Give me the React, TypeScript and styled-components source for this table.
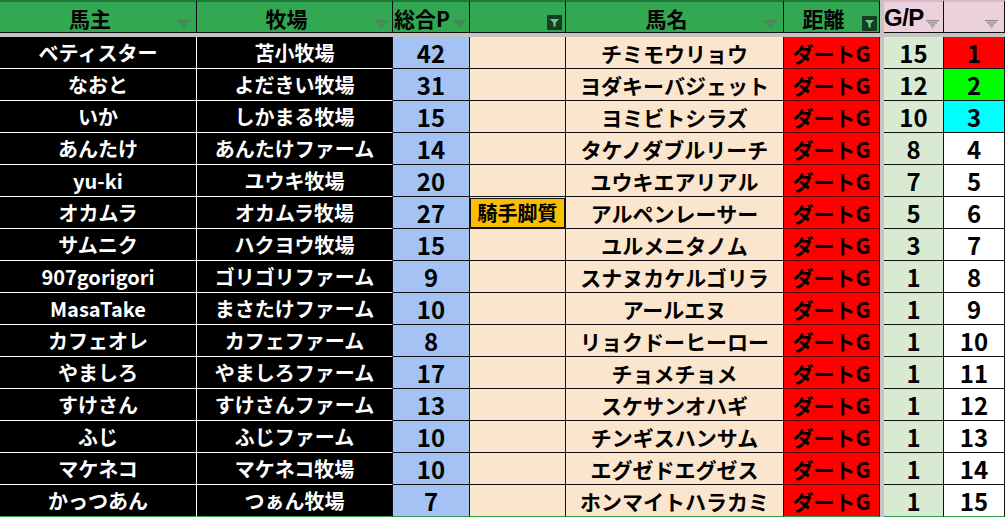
import React from "react";
import styled, { createGlobalStyle } from "styled-components";

const GlobalStyle = createGlobalStyle`
  html, body { margin: 0; padding: 0; background: #ffffff; }
  body { font-family: "Noto Sans CJK JP", "Noto Sans", sans-serif; }
`;

const COLS = "197px 196px 77px 96px 218px 96px 4px 60px 61px";

const Sheet = styled.div`
  width: 1005px;
  height: 517px;
  overflow: hidden;
  display: flex;
  flex-direction: column;
  background: #ffffff;
`;

const HeaderRow = styled.div`
  display: grid;
  grid-template-columns: ${COLS};
  height: 33px;
  box-sizing: border-box;
`;

const HeaderCell = styled.div<{ $bg: string; $align?: "center" | "left" }>`
  position: relative;
  display: flex;
  align-items: center;
  justify-content: ${(p) => (p.$align === "left" ? "flex-start" : "center")};
  box-sizing: border-box;
  background: ${(p) => p.$bg};
  border-top: 2px solid ${(p) => (p.$bg === "#33a852" ? "#1f7a3a" : "#d9b8c8")};
  border-right: 1px solid #101010;
  border-bottom: 1px solid #101010;
  font-size: 21px;
  font-weight: 700;
  line-height: 1;
  color: #000;
  padding-top: 2px;
  padding-right: ${(p) => (p.$align === "left" ? 0 : 16)}px;
  white-space: nowrap;
`;

const HeaderText = styled.span<{ $shift?: number }>`
  margin-left: ${(p) => p.$shift ?? 0}px;
`;

const LatinHeader = styled.span`
  font-family: "Liberation Sans", "Noto Sans", sans-serif;
  font-size: 24px;
  letter-spacing: -0.5px;
`;

const Gap = styled.div`
  background: #c4c4c4;
`;

const Band = styled.div`
  height: 4px;
  background: #c4c4c4;
`;

const BodyRow = styled.div`
  display: grid;
  grid-template-columns: ${COLS};
  height: 32px;
`;

const Cell = styled.div<{ $bg: string; $fg?: string; $line?: string; $under?: string; $last?: boolean; $size?: number }>`
  display: flex;
  align-items: center;
  justify-content: center;
  box-sizing: border-box;
  background: ${(p) => p.$bg};
  color: ${(p) => p.$fg ?? "#000"};
  border-right: 1px solid ${(p) => p.$line ?? "#111"};
  border-bottom: 1px solid ${(p) => (p.$last ? "#2f9e4b" : p.$under ?? p.$line ?? "#111")};
  font-size: ${(p) => p.$size ?? 21}px;
  font-weight: 700;
  line-height: 1;
  white-space: nowrap;
  padding-top: 1px;
  min-width: 0;
`;

const Num = styled.span`
  font-size: 24px;
  line-height: 1;
`;

const Badge = styled.div`
  width: 100%;
  height: 100%;
  box-sizing: border-box;
  display: flex;
  align-items: center;
  justify-content: center;
  background: #fbbc04;
  border: 1px solid #111;
  font-size: 20px;
`;

const FilterSlot = styled.span<{ $right: number; $bottom?: number }>`
  position: absolute;
  right: ${(p) => p.$right}px;
  bottom: ${(p) => p.$bottom ?? 4}px;
  display: flex;
`;

const FilterIcon = ({ color }: { color: string }) => (
  <svg width="13" height="8" viewBox="0 0 13 8">
    <rect x="0" y="0" width="13" height="1.3" fill={color} />
    <rect x="2" y="2.2" width="9" height="1.3" fill={color} />
    <rect x="4" y="4.4" width="5" height="1.3" fill={color} />
    <rect x="5.5" y="6.6" width="2" height="1.3" fill={color} />
  </svg>
);

const ActiveFilter = () => (
  <svg width="15" height="15" viewBox="0 0 15 15">
    <rect x="0" y="0" width="15" height="15" rx="1" fill="#173d22" />
    <path d="M3 4 H12 L8.6 7.8 V11.5 H6.4 V7.8 Z" fill="#63d383" />
  </svg>
);

type Row = {
  owner: string;
  farm: string;
  total: number;
  note?: string;
  horse: string;
  gp: number;
  rank: number;
};

const rows: Row[] = [
  { owner: "ベティスター", farm: "苫小牧場", total: 42, horse: "チミモウリョウ", gp: 15, rank: 1 },
  { owner: "なおと", farm: "よだきい牧場", total: 31, horse: "ヨダキーバジェット", gp: 12, rank: 2 },
  { owner: "いか", farm: "しかまる牧場", total: 15, horse: "ヨミビトシラズ", gp: 10, rank: 3 },
  { owner: "あんたけ", farm: "あんたけファーム", total: 14, horse: "タケノダブルリーチ", gp: 8, rank: 4 },
  { owner: "yu-ki", farm: "ユウキ牧場", total: 20, horse: "ユウキエアリアル", gp: 7, rank: 5 },
  { owner: "オカムラ", farm: "オカムラ牧場", total: 27, note: "騎手脚質", horse: "アルペンレーサー", gp: 5, rank: 6 },
  { owner: "サムニク", farm: "ハクヨウ牧場", total: 15, horse: "ユルメニタノム", gp: 3, rank: 7 },
  { owner: "907gorigori", farm: "ゴリゴリファーム", total: 9, horse: "スナヌカケルゴリラ", gp: 1, rank: 8 },
  { owner: "MasaTake", farm: "まさたけファーム", total: 10, horse: "アールエヌ", gp: 1, rank: 9 },
  { owner: "カフェオレ", farm: "カフェファーム", total: 8, horse: "リョクドーヒーロー", gp: 1, rank: 10 },
  { owner: "やましろ", farm: "やましろファーム", total: 17, horse: "チョメチョメ", gp: 1, rank: 11 },
  { owner: "すけさん", farm: "すけさんファーム", total: 13, horse: "スケサンオハギ", gp: 1, rank: 12 },
  { owner: "ふじ", farm: "ふじファーム", total: 10, horse: "チンギスハンサム", gp: 1, rank: 13 },
  { owner: "マケネコ", farm: "マケネコ牧場", total: 10, horse: "エグゼドエグゼス", gp: 1, rank: 14 },
  { owner: "かっつあん", farm: "つぁん牧場", total: 7, horse: "ホンマイトハラカミ", gp: 1, rank: 15 },
];

const rankBg = (r: number) => (r === 1 ? "#ff0000" : r === 2 ? "#00ff00" : r === 3 ? "#00ffff" : "#ffffff");

const GREEN = "#33a852";
const PINK = "#ead1dc";
const GRAYICON = "#4d7a59";

export default function App() {
  return (
    <>
      <GlobalStyle />
      <Sheet>
        <HeaderRow>
          <HeaderCell $bg={GREEN}>
            <HeaderText>馬主</HeaderText>
            <FilterSlot $right={6}><FilterIcon color={GRAYICON} /></FilterSlot>
          </HeaderCell>
          <HeaderCell $bg={GREEN}>
            <HeaderText>牧場</HeaderText>
            <FilterSlot $right={4}><FilterIcon color={GRAYICON} /></FilterSlot>
          </HeaderCell>
          <HeaderCell $bg={GREEN} $align="left">
            <HeaderText $shift={1}>総合P</HeaderText>
            <FilterSlot $right={3}><FilterIcon color={GRAYICON} /></FilterSlot>
          </HeaderCell>
          <HeaderCell $bg={GREEN}>
            <FilterSlot $right={3} $bottom={2}><ActiveFilter /></FilterSlot>
          </HeaderCell>
          <HeaderCell $bg={GREEN}>
            <HeaderText>馬名</HeaderText>
            <FilterSlot $right={6}><FilterIcon color={GRAYICON} /></FilterSlot>
          </HeaderCell>
          <HeaderCell $bg={GREEN}>
            <HeaderText>距離</HeaderText>
            <FilterSlot $right={2} $bottom={1}><ActiveFilter /></FilterSlot>
          </HeaderCell>
          <Gap />
          <HeaderCell $bg={PINK} $align="left">
            <LatinHeader>G/P</LatinHeader>
            <FilterSlot $right={4}><FilterIcon color="#8a8a8a" /></FilterSlot>
          </HeaderCell>
          <HeaderCell $bg={PINK}>
            <FilterSlot $right={6}><FilterIcon color="#8a8a8a" /></FilterSlot>
          </HeaderCell>
        </HeaderRow>
        <Band />
        {rows.map((r, i) => {
          const last = i === rows.length - 1;
          return (
            <BodyRow key={r.rank}>
              <Cell $bg="#000000" $fg="#ffffff" $line="#ffffff" $last={last} $size={20}>{r.owner}</Cell>
              <Cell $bg="#000000" $fg="#ffffff" $line="#111" $under="#ffffff" $last={last} $size={20}>{r.farm}</Cell>
              <Cell $bg="#a4c2f4" $last={last}><Num>{r.total}</Num></Cell>
              <Cell $bg="#fce5cd" $last={last}>{r.note ? <Badge>{r.note}</Badge> : null}</Cell>
              <Cell $bg="#fce5cd" $last={last}>{r.horse}</Cell>
              <Cell $bg="#ff0000" $last={last} $line="#6b0000">ダートG</Cell>
              <Gap />
              <Cell $bg="#d9ead3" $last={last}><Num>{r.gp}</Num></Cell>
              <Cell $bg={rankBg(r.rank)} $last={last}><Num>{r.rank}</Num></Cell>
            </BodyRow>
          );
        })}
      </Sheet>
    </>
  );
}
